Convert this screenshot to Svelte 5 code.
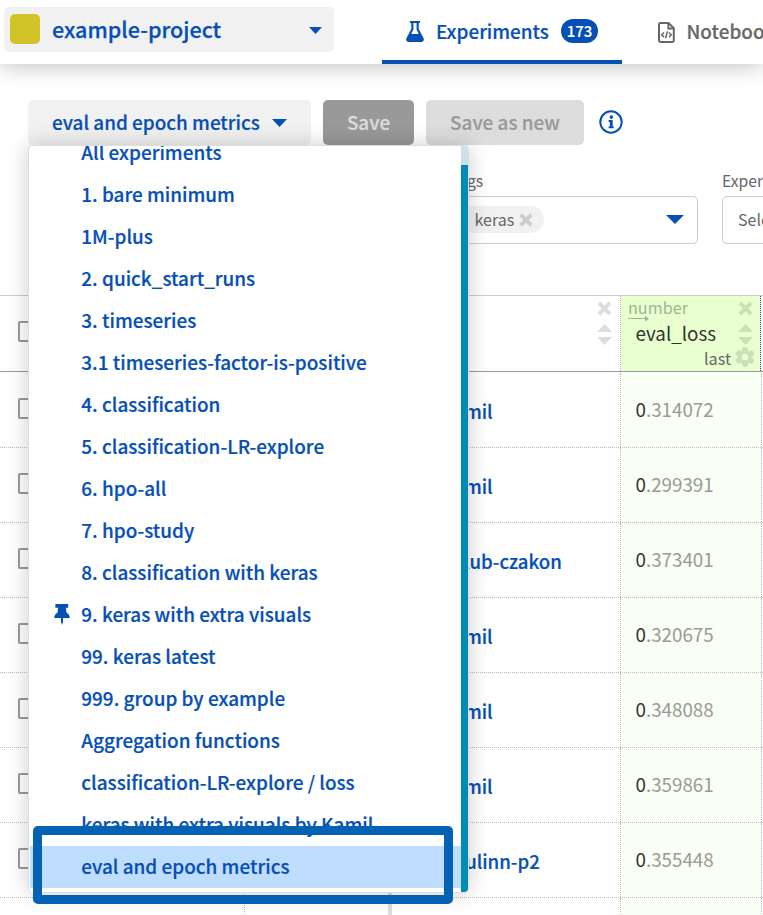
<script>
  const views = [
    'All experiments',
    '1. bare minimum',
    '1M-plus',
    '2. quick_start_runs',
    '3. timeseries',
    '3.1 timeseries-factor-is-positive',
    '4. classification',
    '5. classification-LR-explore',
    '6. hpo-all',
    '7. hpo-study',
    '8. classification with keras',
    '9. keras with extra visuals',
    '99. keras latest',
    '999. group by example',
    'Aggregation functions',
    'classification-LR-explore / loss',
    'keras with extra visuals by Kamil',
    'eval and epoch metrics'
  ];
  const pinned = '9. keras with extra visuals';
  const selected = 'eval and epoch metrics';
  const rows = [
    ['kamil', '314072'],
    ['kamil', '299391'],
    ['jakub-czakon', '373401'],
    ['kamil', '320675'],
    ['kamil', '348088'],
    ['kamil', '359861'],
    ['paulinn-p2', '355448'],
    ['', '']
  ];
</script>

{#snippet cross(size)}
  <svg class="cross" width={size} height={size} viewBox="0 0 14 14"><path d="M1.8 1.8 12.2 12.2M12.2 1.8 1.8 12.2" stroke="currentColor" stroke-width="3.8" /></svg>
{/snippet}

{#snippet sorter()}
  <svg class="sorter" width="15" height="21" viewBox="0 0 15 21"><path d="M0 8 7.5 0 15 8ZM0 13H15L7.5 21Z" fill="currentColor" /></svg>
{/snippet}

<div class="page">
  <header>
    <div class="project">
      <span class="avatar"></span>
      <span class="name">example-project</span>
      <svg width="13" height="7" viewBox="0 0 13 7"><path d="M0 0H13L6.5 7Z" fill="#064fb5" /></svg>
    </div>
    <nav>
      <div class="tab active">
        <svg width="18" height="21" viewBox="0 0 18 21"><path fill="#064fb5" fill-rule="evenodd" d="M4.6 0H13.4Q14 0 14 .6V1.4Q14 2 13.4 2H12.7V8L17.6 17.2Q18.6 21 15.6 21H2.4Q-.6 21 .4 17.2L5.3 8V2H4.6Q4 2 4 1.4V.6Q4 0 4.6 0ZM7.4 2V8.4L5.2 13H12.8L10.6 8.4V2Z" /></svg>
        <span class="tabname">Experiments</span>
        <span class="count">173</span>
      </div>
      <div class="tab next">
        <svg width="17" height="21" viewBox="0 0 17 21" fill="none" stroke="#666"><path d="M2.4 1H10.5L15.8 6.2V18.6Q15.8 20 14.4 20H2.4Q1 20 1 18.6V2.4Q1 1 2.4 1Z" stroke-width="2" /><path d="M10.3 1V6.5H15.8" stroke-width="1.8" /><path d="M6 10.5 3.7 12.8 6 15.1M11 10.5 13.3 12.8 11 15.1M9.4 9.4 7.6 16.2" stroke-width="1.5" /></svg>
        <span class="tabname">Notebooks</span>
      </div>
    </nav>
  </header>

  <div class="toolbar">
    <div class="btn view"><span>eval and epoch metrics</span><svg width="15" height="8" viewBox="0 0 15 8"><path d="M0 0H15L7.5 8Z" fill="#064fb5" /></svg></div>
    <div class="btn save"><span>Save</span></div>
    <div class="btn saveas"><span>Save as new</span></div>
    <svg class="info" width="24" height="24" viewBox="0 0 24 24"><circle cx="12" cy="12" r="10.7" fill="none" stroke="#064fb5" stroke-width="2" /><circle cx="12.3" cy="7.1" r="1.8" fill="#064fb5" /><path fill="#064fb5" d="M9.6 10H13.7V16.4H14.8V18.3H9.6V16.4H10.8V11.9H9.6Z" /></svg>
  </div>

  <div class="filters">
    <div class="field tags">
      <label for="tags">Tags</label>
      <div class="select" id="tags">
        <span class="chip">keras {@render cross(14)}</span>
        <svg width="18" height="9" viewBox="0 0 18 9"><path d="M0 0H18L9 9Z" fill="#064fb5" /></svg>
      </div>
    </div>
    <div class="field state">
      <label for="state">Experiment state</label>
      <div class="select" id="state">Select</div>
    </div>
  </div>

  <div class="table">
    <div class="tr head">
      <div class="c1"><span class="box"></span></div>
      <div class="c2"></div>
      <div class="c3"><span class="tools">{@render cross(15)}{@render sorter()}</span></div>
      <div class="c4">
        <div class="colname">
          <span class="type">number</span>
          <svg class="arrow" width="21" height="6" viewBox="0 0 21 6"><path d="M0 2.5H17" stroke="#a0b492" /><path d="M17 0V5.5L21 2.75Z" fill="#a0b492" /></svg>
          <span class="metric">eval_loss</span>
          <span class="last">last</span>
        </div>
        <span class="tools">
          {@render cross(15)}{@render sorter()}
          <svg class="gear" width="20" height="20" viewBox="-10 -10 20 20"><g fill="currentColor">{#each [0, 60, 120] as a}<rect x="-2.7" y="-9.7" width="5.4" height="19.4" rx="1" transform={`rotate(${a})`} />{/each}</g><circle r="5.4" fill="none" stroke="currentColor" stroke-width="4.2" /><circle r="3.2" fill="#e9ffd0" /></svg>
        </span>
      </div>
    </div>
    {#each rows as [owner, value]}
      <div class="tr">
        <div class="c1"><span class="box"></span></div>
        <div class="c2"></div>
        <div class="c3">{owner}</div>
        <div class="c4">{#if value}<b>0</b>.{value}{/if}</div>
      </div>
    {/each}
  </div>

  <div class="menu">
    <div class="list">
      {#each views as v}
        <div class="item" class:selected={v === selected}>
          {#if v === pinned}
            <svg class="pin" width="16" height="21" viewBox="0 0 16 21"><path fill="#064fb5" d="M1.4 0H14.2V3.8H12L12.4 8.4Q15.6 10 15.8 14H9V18L8 21 7 18V14H.2Q.4 10 3.6 8.4L4 3.8H1.4Z" /></svg>
          {/if}
          <span>{v}</span>
        </div>
      {/each}
    </div>
    <div class="bar"><i></i></div>
  </div>
  <div class="frame"></div>
</div>

<style>
  .page { position: relative; width: 763px; height: 915px; overflow: hidden; background: #fff; font-family: "Noto Sans CJK SC", "Noto Sans", sans-serif; font-size: 18.2px; color: #666; white-space: nowrap; }
  .page * { box-sizing: border-box; }
  svg { display: block; flex: none; }
  header { display: flex; height: 64px; box-shadow: 0 2px 22px rgba(0,0,0,.25); }
  .project { flex: none; display: flex; align-items: center; width: 330px; height: 45px; margin: 7px 48px 0 4px; padding: 0 12px 0 6px; background: #f1f1f1; border-radius: 5px; }
  .project svg { margin-top: 1px; }
  .avatar { width: 30px; height: 30px; margin: -1px 12px 0 0; border-radius: 5px; background: #d1c328; }
  .name { flex: 1; margin-top: -2px; font-size: 21.55px; font-weight: 500; line-height: 30px; color: #064fb5; -webkit-text-stroke: .25px; }
  nav { display: flex; flex: none; }
  .tab { flex: none; display: flex; align-items: center; height: 64px; font-weight: 500; font-size: 18.9px; -webkit-text-stroke: .2px; }
  .active { width: 240px; padding-left: 24px; margin-right: 35.5px; border-bottom: 4px solid #064fb5; padding-top: 3px; color: #064fb5; }
  .tabname { margin: -2px 0 0 12px; line-height: 28px; }
  .count { width: 37px; height: 24px; margin: -1px 0 0 12px; border-radius: 12px; background: #064fb5; color: #fff; font-size: 14.9px; line-height: 23px; text-align: center; }
  .toolbar { display: flex; align-items: center; gap: 12px; height: 45px; margin: 36px 0 0 28px; }
  .btn { display: flex; align-items: center; justify-content: center; height: 45px; border-radius: 5px; font-size: 18.9px; font-weight: 500; line-height: 28px; -webkit-text-stroke: .2px; }
  .btn span { margin-top: -2px; }
  .view { width: 283px; padding: 0 24px; justify-content: space-between; background: #f1f1f1; color: #064fb5; }
  .save { width: 91px; background: #999; color: #ddd; }
  .saveas { width: 158px; background: #ddd; color: #999; }
  .info { margin: -2px 0 0 3px; }
  .filters { display: flex; gap: 24px; margin: 26px 0 0 450px; }
  .field { flex: none; width: 248px; }
  .state { width: 260px; }
  label { display: block; height: 25px; line-height: 20px; font-size: 15.7px; }
  .select { display: flex; align-items: center; justify-content: space-between; height: 48px; padding: 0 13px 2px 9.5px; border: 1px solid #ccc; border-radius: 5px; font-size: 16px; }
  .state .select { padding-left: 15px; }
  .chip { display: flex; align-items: center; gap: 5px; height: 27px; margin-top: 1px; padding: 0 11px 0 14px; border-radius: 14px; background: #f1f1f1; line-height: 24px; }
  .chip { padding-bottom: 1px; }
  .chip .cross { color: #ccc; margin-top: 1px; }
  .table { margin-top: 51px; border-top: 1px solid #ccc; }
  .tr { display: flex; height: 75px; border-bottom: 1px dotted #bbb; }
  .head { height: 76px; margin-bottom: 1px; border-bottom: 1px solid #999; }
  .c1 { display: flex; align-items: center; width: 245px; padding-left: 18px; border-right: 1px dotted #bbb; }
  .box { width: 21px; height: 21px; border: 2px solid #999; border-radius: 2px; margin-top: -4px; }
  .c2 { width: 147px; border-right: 4px solid #ddd; }
  .c3 { width: 229px; padding: 24px 0 0 51px; border-right: 1px dotted #bbb; color: #064fb5; font-size: 18.62px; font-weight: 500; line-height: 28px; -webkit-text-stroke: .2px; }
  .c4 { width: 141px; padding: 22px 0 0 14.5px; border-right: 1px dotted #bbb; background: #f9fff4; color: #999; font-size: 18.8px; line-height: 28px; }
  .c4 b { color: #333; font-weight: 400; }
  .head .c3 { display: flex; justify-content: flex-end; padding: 5px 8px 0 0; color: #ddd; }
  .head .c4 { display: flex; justify-content: space-between; width: 140px; padding: 0 5px 0 7px; background: #e9ffd0; border-right: 1px dotted #064fb5; }
  .tools { display: flex; flex-direction: column; align-items: center; gap: 8px; color: #ddd; }
  .head .c4 .tools { padding-top: 5px; color: #cce0b8; }
  .gear { margin-top: -6px; }
  .colname { display: flex; flex-direction: column; width: 103px; }
  .type { height: 20px; line-height: 22px; font-size: 16.2px; color: #a0b492; }
  .arrow { height: 6px; }
  .metric { margin: -3px 0 0 7.5px; height: 28px; line-height: 28px; font-size: 18.8px; color: #333; }
  .last { align-self: flex-end; height: 20px; line-height: 22px; font-size: 16.2px; color: #666; }
  .menu { position: absolute; left: 28px; top: 145px; width: 441px; height: 748px; display: flex; overflow: hidden; border: 1px solid #ddd; border-radius: 5px; background: #fff; box-shadow: 0 0 22px rgba(0,0,0,.2); }
  .list { flex: 1; margin: -14px 0 0 1px; }
  .item { position: relative; height: 42px; padding-left: 51.3px; line-height: 39px; color: #064fb5; font-size: 18.93px; font-weight: 500; -webkit-text-stroke: .2px; }
  .selected { background: #bfdeff; }
  .pin { position: absolute; left: 23.5px; top: 10px; }
  .bar { width: 7px; padding-top: 19px; background: #cce0e8; }
  .bar i { display: block; height: 727px; background: #008cb4; }
  .frame { position: absolute; left: 33px; top: 826px; width: 420px; height: 78px; border: 9px solid #0462b5; border-radius: 5px; }
</style>
